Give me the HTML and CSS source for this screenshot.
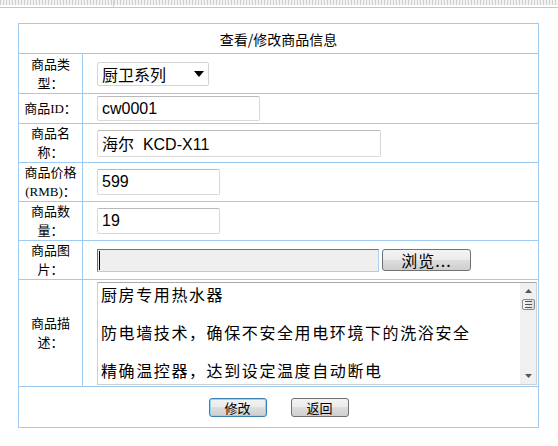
FILE: index.html
```html
<!DOCTYPE html>
<html lang="zh-CN">
<head>
    <meta charset="UTF-8">
    <title>查看/修改商品信息</title>
    <link rel="stylesheet" href="styles.css">
</head>
<body>
    <div class="topbar">
        <span class="topbar-left"></span>
        <span class="topbar-right"></span>
    </div>

    <form class="goods-form">
        <table class="goods">
            <tr>
                <td colspan="2" class="title">查看/修改商品信息</td>
            </tr>
            <tr>
                <td class="label tall">商品类型：</td>
                <td class="field">
                    <div class="select">
                        <span>厨卫系列</span>
                        <svg width="10" height="6" viewBox="0 0 10 6"><path d="M0 0H10L5 6Z" fill="#000"/></svg>
                    </div>
                </td>
            </tr>
            <tr>
                <td class="label short">商品ID：</td>
                <td class="field"><input type="text" class="text id" value="cw0001"></td>
            </tr>
            <tr>
                <td class="label">商品名称：</td>
                <td class="field"><input type="text" class="text name" value="海尔  KCD-X11"></td>
            </tr>
            <tr>
                <td class="label">商品价格(RMB)：</td>
                <td class="field"><input type="text" class="text num" value="599"></td>
            </tr>
            <tr>
                <td class="label">商品数量：</td>
                <td class="field"><input type="text" class="text num" value="19"></td>
            </tr>
            <tr>
                <td class="label">商品图片：</td>
                <td class="field">
                    <div class="file">
                        <div class="file-box"><span class="caret"></span></div>
                        <button type="button" class="browse">浏览...</button>
                    </div>
                </td>
            </tr>
            <tr>
                <td class="label desc-label">商品描述：</td>
                <td class="field">
                    <div class="desc">
                        <textarea>厨房专用热水器

防电墙技术，确保不安全用电环境下的洗浴安全

精确温控器，达到设定温度自动断电</textarea>
                        <div class="scroll">
                            <svg class="arrow up" width="7" height="4" viewBox="0 0 7 4"><path d="M0 4H7L3.5 0Z" fill="#555"/></svg>
                            <div class="thumb"><i></i><i></i><i></i></div>
                            <div class="track"></div>
                            <svg class="arrow" width="7" height="4" viewBox="0 0 7 4"><path d="M0 0H7L3.5 4Z" fill="#555"/></svg>
                        </div>
                    </div>
                </td>
            </tr>
            <tr>
                <td colspan="2" class="actions">
                    <button type="button" class="btn primary">修改</button>
                    <button type="button" class="btn">返回</button>
                </td>
            </tr>
        </table>
    </form>
</body>
</html>
```

FILE: styles.css
```css
/* Page */
body {
    margin: 0;
    background: #fff;
    color: #000;
    font-family: "Liberation Serif", "Noto Sans CJK SC", serif;
}

/* Dotted frame edge along the top */
.topbar {
    display: flex;
    height: 7px;
    border-bottom: 1px solid #a6cdf5;
}

.topbar-left,
.topbar-right {
    background: repeating-linear-gradient(90deg, #cfcfcf 0 1px, #f3f3f3 1px 3px) top / 100% 5px no-repeat;
}

.topbar-left {
    width: 113px;
    border-right: 1px solid #c4d6ea;
}

.topbar-right {
    flex: 1;
}

/* Form table */
.goods {
    border-collapse: collapse;
    width: 521px;
    margin: 15px 0 0 18px;
}

.goods td {
    border: 1px solid #9ecbf6;
    padding: 0;
}

.title {
    height: 29px;
    text-align: center;
    font: 14px/20px "Noto Sans CJK SC", sans-serif;
}

.label {
    width: 63px;
    height: 38px;
    text-align: center;
    font-size: 13px;
    line-height: 19px;
}

.label.tall {
    height: 39px;
}

.label.short {
    height: 29px;
}

.desc-label {
    height: 106px;
}

.field {
    padding-left: 14px !important;
    line-height: 0;
}

/* Select */
.select {
    display: flex;
    align-items: center;
    justify-content: space-between;
    box-sizing: border-box;
    width: 112px;
    height: 24px;
    padding: 0 4px 0 4px;
    border: 1px solid #d4d4d4;
    border-radius: 2px;
    font: 16px/20px "Noto Sans CJK SC", sans-serif;
}

/* Text inputs */
.text {
    display: block;
    box-sizing: border-box;
    margin: 0;
    padding: 0 4px;
    border: 1px solid #d8d8d8;
    border-top-color: #b9b9b9;
    border-radius: 2px;
    font: 16px "Liberation Sans", "Noto Sans CJK SC", sans-serif;
    color: #000;
}

.id {
    width: 163px;
    height: 25px;
}

.name {
    width: 284px;
    height: 27px;
}

.num {
    width: 123px;
    height: 26px;
}

/* File picker */
.file {
    display: flex;
    align-items: center;
    gap: 3px;
}

.file-box {
    display: flex;
    align-items: center;
    box-sizing: border-box;
    width: 282px;
    height: 23px;
    padding-left: 1px;
    background: #efefef;
    border: 1px solid #a9d0f0;
    border-top-color: #3c7fb1;
    border-left-color: #3c7fb1;
}

.caret {
    width: 1px;
    height: 19px;
    background: #000;
}

.browse,
.btn {
    box-sizing: border-box;
    padding: 0;
    border: 1px solid #707070;
    border-radius: 3px;
    background: linear-gradient(#f3f3f3, #ebebeb 50%, #dddddd 50%, #cfcfcf);
    font-family: "Noto Sans CJK SC", sans-serif;
    color: #000;
}

.browse {
    width: 89px;
    height: 22px;
    font-size: 16px;
    line-height: 18px;
    letter-spacing: 1px;
}

/* Description */
.desc {
    display: flex;
    box-sizing: border-box;
    width: 440px;
    height: 103px;
    border: 1px solid #d0d0d0;
    border-top-color: #a8a8a8;
}

.desc textarea {
    flex: 1;
    margin: 0;
    padding: 2px 3px;
    border: none;
    outline: none;
    resize: none;
    overflow: hidden;
    font: 16px/19px "Noto Sans CJK SC", sans-serif;
    letter-spacing: 1.6px;
    color: #000;
}

.scroll {
    display: flex;
    flex-direction: column;
    align-items: center;
    width: 16px;
    background: #f0f0f0;
}

.arrow {
    margin: 6px 0;
}

.arrow.up {
    margin-bottom: 6px;
}

.thumb {
    display: flex;
    flex-direction: column;
    justify-content: center;
    gap: 2px;
    box-sizing: border-box;
    width: 13px;
    height: 11px;
    padding: 0 2px;
    border: 1px solid #8a8a8a;
    border-radius: 2px;
    background: linear-gradient(90deg, #f6f6f6, #dcdcdc);
}

.thumb i {
    display: block;
    height: 1px;
    background: #555;
}

.track {
    flex: 1;
}

/* Buttons row */
.actions {
    height: 40px;
    text-align: center;
    line-height: 0;
}

.btn {
    width: 58px;
    height: 19px;
    margin: 0 10px;
    font-size: 13px;
    line-height: 15px;
    vertical-align: middle;
}

.btn.primary {
    border-color: #3c7fb1;
    box-shadow: inset 0 0 0 1px #8fd6f7;
}
```
